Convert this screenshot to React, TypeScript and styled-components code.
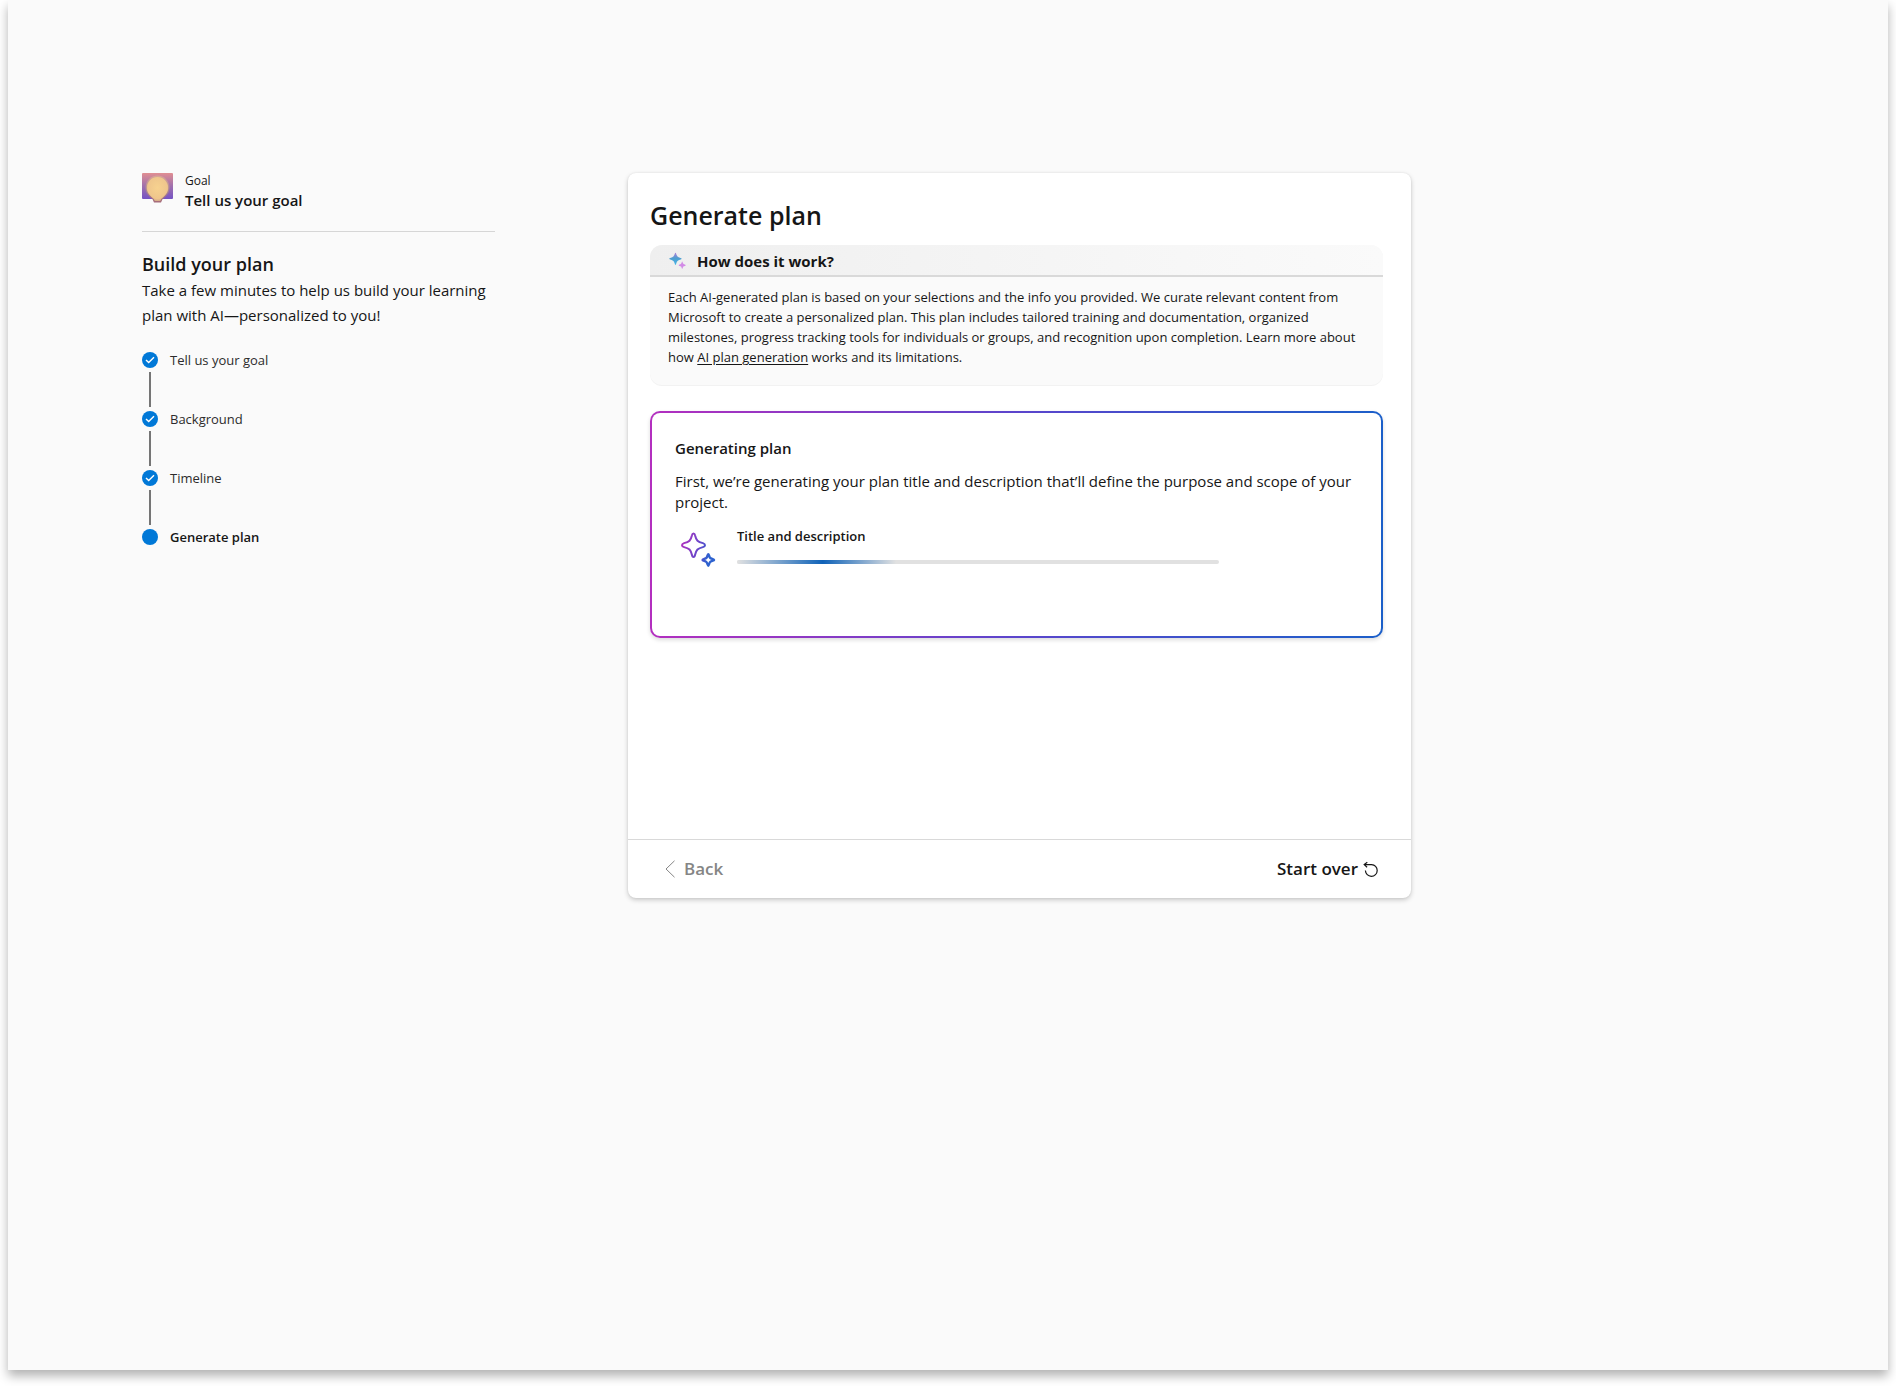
import React from "react";
import styled, { createGlobalStyle } from "styled-components";

const GlobalStyle = createGlobalStyle`
  *, *::before, *::after { box-sizing: border-box; }
  body {
    margin: 0;
    background: #fff;
    color: #161616;
    font-family: "Open Sans", "Noto Sans", sans-serif;
    font-size: 15px;
  }
  h1, h2, h3, p, ol { margin: 0; padding: 0; }
`;

const Frame = styled.div`
  min-height: calc(100vh - 16px);
  margin: 0 8px 16px;
  padding: 173px 134px 64px;
  background: #fafafa;
  box-shadow: 0 6px 10px rgba(0, 0, 0, 0.3);
`;

const Layout = styled.div`
  display: grid;
  grid-template-columns: minmax(0, 353px) minmax(0, 783px);
  column-gap: 133px;
  align-items: start;
`;

const Sidebar = styled.aside`
  display: flex;
  flex-direction: column;
`;

const GoalHeader = styled.div`
  display: flex;
  gap: 12px;
  padding-bottom: 20px;
  border-bottom: 1px solid #d6d6d6;
`;

const GoalLabel = styled.p`
  font-size: 12px;
  line-height: 16px;
`;

const GoalTitle = styled.p`
  font-size: 15px;
  font-weight: 600;
  line-height: 22px;
`;

const SidebarTitle = styled.h2`
  margin-top: 19px;
  font-size: 18px;
  font-weight: 600;
  line-height: 26px;
`;

const SidebarText = styled.p`
  margin-top: 1px;
  font-size: 15px;
  line-height: 25px;
`;

const Steps = styled.ol`
  margin-top: 22px;
  list-style: none;
`;

const Step = styled.li<{ $current?: boolean }>`
  display: grid;
  grid-template-columns: 16px 1fr;
  column-gap: 12px;
  align-items: center;
  font-size: 13px;
  line-height: 20px;
  font-weight: ${(p) => (p.$current ? 600 : 400)};
  color: ${(p) => (p.$current ? "#161616" : "#2c2c2c")};
`;

const Connector = styled.span`
  width: 2px;
  height: 35px;
  margin: 2px auto;
  background: #757575;
`;

const Card = styled.main`
  display: flex;
  flex-direction: column;
  min-height: 725px;
  border-radius: 8px;
  background: #fff;
  box-shadow: 0 2px 5px rgba(0, 0, 0, 0.2), 0 0 2px rgba(0, 0, 0, 0.08);
`;

const CardBody = styled.div`
  flex: 1;
  padding: 22px 28px 24px 22px;
`;

const CardTitle = styled.h1`
  font-size: 25px;
  font-weight: 600;
  line-height: 40px;
`;

const InfoPanel = styled.section`
  margin-top: 10px;
  border-radius: 12px;
  background: #fafafa;
  overflow: hidden;
  box-shadow: 0 1px 0 #f2f2f2;
`;

const InfoHeader = styled.div`
  display: flex;
  align-items: center;
  gap: 10px;
  height: 32px;
  padding: 2px 18px 0;
  border-bottom: 2px solid #d9d9d9;
  background: linear-gradient(90deg, #efefef, #fafafa);
`;

const InfoTitle = styled.h2`
  font-size: 15px;
  font-weight: 700;
  line-height: 22px;
`;

const InfoText = styled.p`
  padding: 10px 24px 18px 18px;
  font-size: 13px;
  line-height: 20px;
`;

const InfoLink = styled.a`
  color: inherit;
  text-decoration: underline;
  text-underline-offset: 2px;
`;

const ProgressPanel = styled.section`
  min-height: 227px;
  margin-top: 26px;
  padding: 24px 23px;
  border: 2px solid transparent;
  border-radius: 10px;
  background:
    linear-gradient(#fff, #fff) padding-box,
    linear-gradient(90deg, #b32fbf, #5b45cc 50%, #1b5fc9) border-box;
  box-shadow: 0 2px 4px rgba(0, 0, 0, 0.14);
`;

const ProgressTitle = styled.h2`
  font-size: 15px;
  font-weight: 600;
  line-height: 22px;
`;

const ProgressText = styled.p`
  margin-top: 12px;
  font-size: 15px;
  line-height: 21px;
`;

const ProgressRow = styled.div`
  display: grid;
  grid-template-columns: 46px minmax(0, 482px);
  column-gap: 16px;
  margin-top: 13px;
`;

const ProgressLabel = styled.h3`
  font-size: 13px;
  font-weight: 600;
  line-height: 20px;
`;

const ProgressTrack = styled.div`
  height: 4px;
  margin-top: 14px;
  border-radius: 2px;
  background: #e1e1e1;
  overflow: hidden;
`;

const ProgressGlow = styled.div`
  width: 33%;
  height: 100%;
  background: linear-gradient(90deg, #e1e1e1, #0f62b8 54%, #e1e1e1);
`;

const SparkleSlot = styled.div`
  display: flex;
  justify-content: center;
  padding-top: 6px;
`;

const CardFooter = styled.footer`
  display: flex;
  align-items: center;
  justify-content: space-between;
  height: 59px;
  padding: 0 33px 0 36px;
  border-top: 1px solid #d9d9d9;
`;

const FooterButton = styled.button<{ $gap: number }>`
  display: flex;
  align-items: center;
  gap: ${(p) => p.$gap}px;
  padding: 0;
  border: 0;
  background: none;
  color: #161616;
  font-family: inherit;
  font-size: 17px;
  font-weight: 600;
  line-height: 24px;
  &:disabled { color: #858585; }
`;

const GoalIcon = () => (
  <svg width="31" height="31" viewBox="0 0 31 31" aria-hidden="true">
    <defs>
      <linearGradient id="goalBack" x1="0" y1="0" x2="0" y2="1">
        <stop offset="0" stopColor="#e08e92" />
        <stop offset="0.5" stopColor="#a070ad" />
        <stop offset="1" stopColor="#7553c4" />
      </linearGradient>
      <linearGradient id="goalRim" x1="0" y1="0" x2="0" y2="1">
        <stop offset="0" stopColor="#d9a695" />
        <stop offset="0.6" stopColor="#a58295" />
        <stop offset="1" stopColor="#a56a78" />
      </linearGradient>
      <radialGradient id="goalBulb" cx="0.5" cy="0.45" r="0.6">
        <stop offset="0" stopColor="#f7d28f" />
        <stop offset="0.75" stopColor="#efc68c" />
        <stop offset="1" stopColor="#c79a88" />
      </radialGradient>
    </defs>
    <rect width="31" height="26" rx="1" fill="url(#goalBack)" />
    <path d="M15.500 2.500a12 12 0 0 0-12 12.500c0 5 3 8 7 11.300l1.500 3.200h7l1.500-3.200c4-3.300 7-6.300 7-11.300a12 12 0 0 0-12-12.500z" fill="url(#goalRim)" />
    <path d="M15.500 4a10.800 10.800 0 0 0-10.800 11c0 4.500 2.900 7.500 6.800 10.700l1.300 2.300h5.400l1.300-2.300c3.900-3.200 6.800-6.200 6.800-10.700a10.800 10.800 0 0 0-10.800-11z" fill="url(#goalBulb)" />
  </svg>
);

const StepMark = ({ done }: { done: boolean }) => (
  <svg width="16" height="16" viewBox="0 0 16 16" aria-hidden="true">
    <circle cx="8" cy="8" r="8" fill="#0078d7" />
    {done && <path d="M4 7.900l2.700 2.700 5.300-5.300" fill="none" stroke="#fff" strokeWidth="1.400" />}
  </svg>
);

const ColorSparkle = () => (
  <svg width="19" height="19" viewBox="0 0 19 19" aria-hidden="true">
    <defs>
      <linearGradient id="bigSpark" x1="0" y1="0" x2="0" y2="1">
        <stop offset="0" stopColor="#b07fd8" />
        <stop offset="0.45" stopColor="#4f9fd0" />
        <stop offset="1" stopColor="#45b4e6" />
      </linearGradient>
    </defs>
    <path d="M7.500.8c.7 0 .9 2.600 2 3.700s4.200 1.300 4.200 2.200-3.100 1.200-4.200 2.300-1.300 3.900-2 3.900-1-2.800-2.100-3.900-4.200-1.400-4.200-2.300 3.100-1.100 4.200-2.200S6.800.8 7.500.8z" fill="url(#bigSpark)" />
    <path d="M14.200 9.500c.4 0 .6 1.700 1.200 2.300s2.300.8 2.300 1.400-1.700.8-2.300 1.400-.8 2.300-1.200 2.300-.6-1.700-1.200-2.300-2.300-.8-2.300-1.400 1.700-.8 2.300-1.400.8-2.300 1.200-2.300z" fill="#d28be6" />
  </svg>
);

const OutlineSparkle = () => (
  <svg width="36" height="36" viewBox="0 0 36 36" aria-hidden="true">
    <defs>
      <linearGradient id="outlineSpark" gradientUnits="userSpaceOnUse" x1="0" y1="12" x2="30" y2="20">
        <stop offset="0" stopColor="#b32fbf" />
        <stop offset="0.7" stopColor="#5b4bcb" />
        <stop offset="1" stopColor="#2d62cf" />
      </linearGradient>
    </defs>
    <g fill="none" stroke="url(#outlineSpark)" strokeWidth="2" strokeLinejoin="round">
      <path d="M13.500 1.500q1.200 0 1.600 1.900c1.200 5 2.600 6.500 7.800 7.700Q25 11.800 25 13.200t-2.100 1.900c-5.200 1.200-6.600 2.700-7.800 7.700Q14.700 25 13.500 25t-1.600-2.200c-1.200-5-2.600-6.500-7.800-7.700Q2 14.600 2 13.200t2.100-2.100c5.200-1.200 6.600-2.700 7.800-7.700Q12.300 1.500 13.500 1.500z" />
      <path strokeWidth="2.400" d="M28.300 22.200c.6 0 .9 2.800 1.800 3.700s4 1.200 4 2-3.100 1.200-4 2.100-1.200 3.800-1.800 3.800-1-2.900-1.900-3.800-3.900-1.300-3.900-2.100 3-1.100 3.900-2 1.300-3.700 1.900-3.700z" />
    </g>
  </svg>
);

const ChevronLeft = () => (
  <svg width="12" height="18" viewBox="0 0 12 18" aria-hidden="true">
    <path d="M10.500.8L2 9l8.500 8.200" fill="none" stroke="currentColor" strokeWidth="1" />
  </svg>
);

const RestartIcon = () => (
  <svg width="15" height="17" viewBox="0 0 15 17" aria-hidden="true">
    <path d="M4.300 1.200L1.200 3.600l2.900 2.600M1.400 3.700h7.200c3.200 0 5.600 2.600 5.600 5.700A5.900 5.900 0 0 1 8.300 15.300 5.900 5.900 0 0 1 2.400 9.600" fill="none" stroke="currentColor" strokeWidth="1.200" />
  </svg>
);

const steps = ["Tell us your goal", "Background", "Timeline", "Generate plan"];

export default function App() {
  return (
    <>
      <GlobalStyle />
      <Frame>
        <Layout>
          <Sidebar>
            <GoalHeader>
              <GoalIcon />
              <div>
                <GoalLabel>Goal</GoalLabel>
                <GoalTitle>Tell us your goal</GoalTitle>
              </div>
            </GoalHeader>
            <SidebarTitle>Build your plan</SidebarTitle>
            <SidebarText>
              Take a few minutes to help us build your learning plan with AI—personalized to you!
            </SidebarText>
            <Steps>
              {steps.map((label, i) => {
                const current = i === steps.length - 1;
                return (
                  <Step key={label} $current={current} aria-current={current ? "step" : undefined}>
                    <StepMark done={!current} />
                    <span>{label}</span>
                    {!current && <Connector />}
                  </Step>
                );
              })}
            </Steps>
          </Sidebar>
          <Card>
            <CardBody>
              <CardTitle>Generate plan</CardTitle>
              <InfoPanel>
                <InfoHeader>
                  <ColorSparkle />
                  <InfoTitle>How does it work?</InfoTitle>
                </InfoHeader>
                <InfoText>
                  Each AI-generated plan is based on your selections and the info you provided. We curate
                  relevant content from Microsoft to create a personalized plan. This plan includes tailored
                  training and documentation, organized milestones, progress tracking tools for individuals or
                  groups, and recognition upon completion. Learn more about how{" "}
                  <InfoLink href="#ai-plan-generation">AI plan generation</InfoLink> works and its limitations.
                </InfoText>
              </InfoPanel>
              <ProgressPanel>
                <ProgressTitle>Generating plan</ProgressTitle>
                <ProgressText>
                  First, we’re generating your plan title and description that’ll define the purpose and scope
                  of your project.
                </ProgressText>
                <ProgressRow>
                  <SparkleSlot>
                    <OutlineSparkle />
                  </SparkleSlot>
                  <div>
                    <ProgressLabel id="progress-label">Title and description</ProgressLabel>
                    <ProgressTrack role="progressbar" aria-labelledby="progress-label">
                      <ProgressGlow />
                    </ProgressTrack>
                  </div>
                </ProgressRow>
              </ProgressPanel>
            </CardBody>
            <CardFooter>
              <FooterButton type="button" disabled $gap={8}>
                <ChevronLeft />
                Back
              </FooterButton>
              <FooterButton type="button" $gap={5}>
                Start over
                <RestartIcon />
              </FooterButton>
            </CardFooter>
          </Card>
        </Layout>
      </Frame>
    </>
  );
}
